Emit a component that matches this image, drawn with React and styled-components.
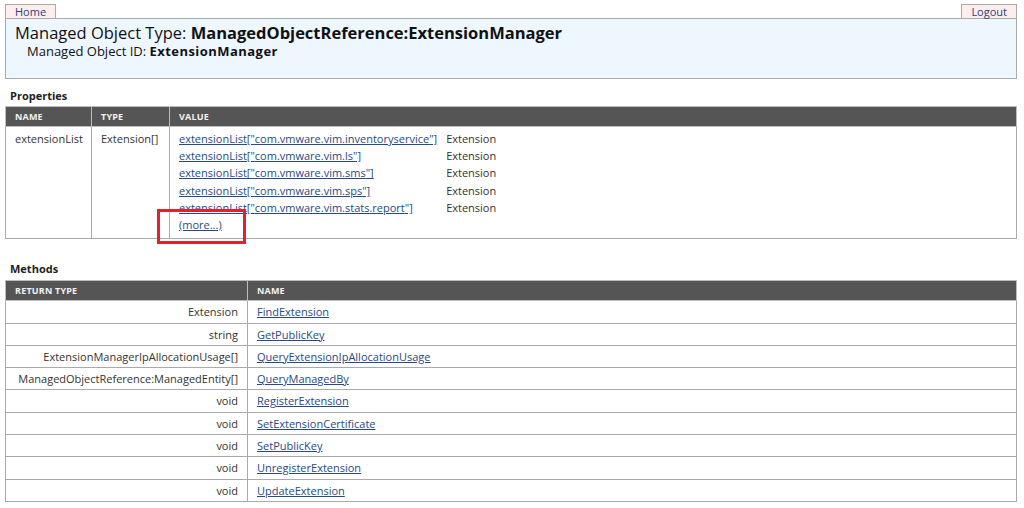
import styled, { createGlobalStyle } from "styled-components";

const GlobalStyle = createGlobalStyle`
  body {
    margin: 0;
    background: #fff;
    color: #333;
    font-family: "Open Sans", "Liberation Sans", sans-serif;
    font-size: 11px;
  }
`;

const Page = styled.div`
  padding: 4px 7px 0 5px;
`;

const TabBar = styled.div`
  display: flex;
  justify-content: space-between;
  align-items: flex-end;
`;

const Tab = styled.a`
  display: block;
  height: 13px;
  line-height: 13px;
  padding: 0 9px;
  border: 1px solid #aaa;
  border-bottom: none;
  background: #fdeeed;
  color: #2a3f7c;
  font-size: 11px;
  text-decoration: none;
`;

const HeaderBox = styled.div`
  box-sizing: border-box;
  height: 61px;
  padding: 4px 9px 0;
  border: 1px solid #aaa;
  background: #eef6fe;
`;

const Title = styled.div`
  font-size: 16.5px;
  line-height: 20px;
  color: #111;
`;

const SubTitle = styled.div`
  margin: 0 0 0 12px;
  font-size: 13px;
  line-height: 16px;
  color: #111;
`;

const Strong = styled.span`
  font-weight: 700;
  letter-spacing: ${(p) => p.$spacing || 0}px;
`;

const SectionTitle = styled.div`
  margin: ${(p) => p.$top}px 0 ${(p) => p.$bottom}px 5px;
  font-size: 11px;
  font-weight: 700;
  line-height: 14px;
  color: #222;
`;

const Table = styled.table`
  width: 100%;
  border-collapse: collapse;
  table-layout: fixed;
`;

const HeadCell = styled.th`
  width: ${(p) => (p.$w ? `${p.$w}px` : "auto")};
  height: 19px;
  padding: 0 9px;
  background: #555;
  color: #f2f2f2;
  border: 1px solid #bdbdbd;
  font-size: 9px;
  font-weight: 700;
  text-align: left;
  letter-spacing: 0.2px;
  text-transform: uppercase;
`;

const PropCell = styled.td`
  padding: 3px 9px 5px;
  border: 1px solid #aaa;
  vertical-align: top;
  line-height: 17.2px;
`;

const ValueList = styled.div`
  display: grid;
  grid-template-columns: max-content max-content;
  column-gap: 9px;
`;

const Link = styled.a`
  color: #27498a;
  text-decoration: underline;
`;

const MoreRow = styled.span`
  position: relative;
  grid-column: 1 / -1;
`;

const Highlight = styled.span`
  position: absolute;
  left: -22px;
  top: -7px;
  width: 89px;
  height: 35px;
  box-sizing: border-box;
  border: 3px solid #e5202a;
  pointer-events: none;
`;

const MethodCell = styled.td`
  height: 21.3px;
  padding: 0 9px;
  border: 1px solid #aaa;
  line-height: 21.3px;
  text-align: ${(p) => p.$align || "left"};
  white-space: nowrap;
`;

const extensions = [
  "com.vmware.vim.inventoryservice",
  "com.vmware.vim.ls",
  "com.vmware.vim.sms",
  "com.vmware.vim.sps",
  "com.vmware.vim.stats.report",
];

const methods = [
  ["Extension", "FindExtension"],
  ["string", "GetPublicKey"],
  ["ExtensionManagerIpAllocationUsage[]", "QueryExtensionIpAllocationUsage"],
  ["ManagedObjectReference:ManagedEntity[]", "QueryManagedBy"],
  ["void", "RegisterExtension"],
  ["void", "SetExtensionCertificate"],
  ["void", "SetPublicKey"],
  ["void", "UnregisterExtension"],
  ["void", "UpdateExtension"],
];

export default function App() {
  return (
    <>
      <GlobalStyle />
      <Page>
        <TabBar>
          <Tab href="#">Home</Tab>
          <Tab href="#">Logout</Tab>
        </TabBar>
        <HeaderBox>
          <Title>
            Managed Object Type: <Strong>ManagedObjectReference:ExtensionManager</Strong>
          </Title>
          <SubTitle>
            Managed Object ID: <Strong $spacing={0.45}>ExtensionManager</Strong>
          </SubTitle>
        </HeaderBox>

        <SectionTitle $top={10} $bottom={3}>Properties</SectionTitle>
        <Table>
          <thead>
            <tr>
              <HeadCell $w={67}>Name</HeadCell>
              <HeadCell $w={59}>Type</HeadCell>
              <HeadCell>Value</HeadCell>
            </tr>
          </thead>
          <tbody>
            <tr>
              <PropCell>extensionList</PropCell>
              <PropCell>Extension[]</PropCell>
              <PropCell>
                <ValueList>
                  {extensions.map((key) => (
                    <>
                      <Link href="#" key={key}>extensionList["{key}"]</Link>
                      <span key={key + "-t"}>Extension</span>
                    </>
                  ))}
                  <MoreRow>
                    <Link href="#">(more...)</Link>
                    <Highlight />
                  </MoreRow>
                </ValueList>
              </PropCell>
            </tr>
          </tbody>
        </Table>

        <SectionTitle $top={23} $bottom={4}>Methods</SectionTitle>
        <Table>
          <thead>
            <tr>
              <HeadCell $w={223}>Return Type</HeadCell>
              <HeadCell>Name</HeadCell>
            </tr>
          </thead>
          <tbody>
            {methods.map(([ret, name]) => (
              <tr key={name}>
                <MethodCell $align="right">{ret}</MethodCell>
                <MethodCell>
                  <Link href="#">{name}</Link>
                </MethodCell>
              </tr>
            ))}
          </tbody>
        </Table>
      </Page>
    </>
  );
}
